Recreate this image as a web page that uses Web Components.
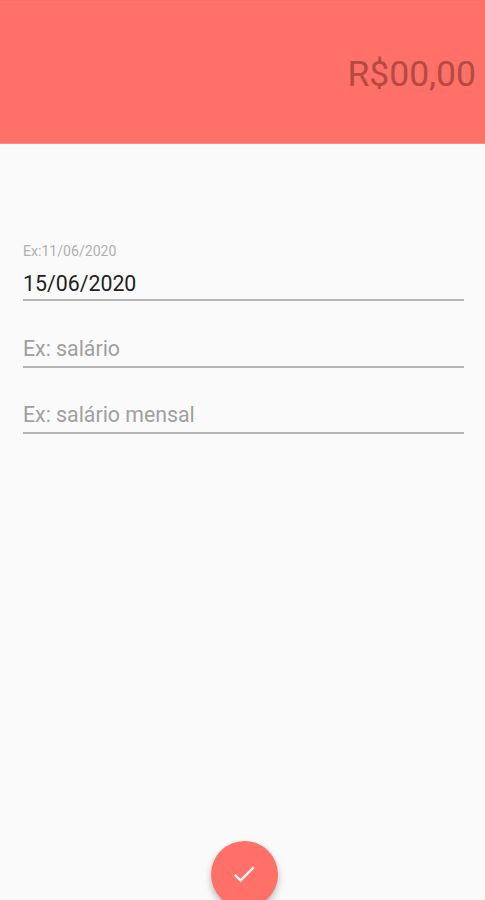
<!DOCTYPE html>
<html lang="pt-BR">
<head>
<meta charset="utf-8">
<title>Receita</title>
<style>
  body{ margin:0; font-family: Roboto, "Liberation Sans", sans-serif; }
</style>
</head>
<body>
<entry-screen>
  <amount-bar slot="top">R$00,00</amount-bar>
  <text-field label="Ex:11/06/2020" value="15/06/2020"></text-field>
  <text-field hint="Ex: salário"></text-field>
  <text-field hint="Ex: salário mensal"></text-field>
  <save-fab slot="action"></save-fab>
</entry-screen>

<script>
  const mount = (el, html) => {
    el.attachShadow({mode:'open'}).innerHTML = html;
  };

  class EntryScreen extends HTMLElement {
    constructor(){
      super();
      mount(this, `
        <style>
          :host{
            display:flex; flex-direction:column;
            height:900px;
            background:#fafafa;
            overflow:hidden;
          }
          .form{ flex:1; padding:91px 21px 0 23px }
          .action{ display:flex; justify-content:center; height:59px; padding-left:3px }
        </style>
        <slot name="top"></slot>
        <div class="form"><slot></slot></div>
        <div class="action"><slot name="action"></slot></div>
      `);
    }
  }

  class AmountBar extends HTMLElement {
    constructor(){
      super();
      mount(this, `
        <style>
          :host{
            display:flex; align-items:center; justify-content:flex-end;
            box-sizing:border-box;
            height:144px;
            padding:4px 9px 0 0;
            background:#ff7069;
            border-top:1px solid #f46f69;
            border-bottom:1px solid #fe8c86;
            color:#b24b43;
            font-size:35.5px;
          }
        </style>
        <slot></slot>
      `);
    }
  }

  class TextField extends HTMLElement {
    connectedCallback(){
      if(this.shadowRoot) return;
      const label = this.getAttribute('label');
      const value = this.getAttribute('value');
      const hint  = this.getAttribute('hint');
      mount(this, `
        <style>
          :host{
            display:flex; flex-direction:column; justify-content:flex-end;
            box-sizing:border-box;
            height:66.4px;
            border-bottom:2px solid #b5b5b5;
            padding-bottom:5px;
          }
          :host([value]){ padding-bottom:3px }
          .label{ font-size:14.1px; line-height:16px; color:#b0b0b0; margin-bottom:13px }
          .text{ font-size:21.3px; line-height:24px; color:#222 }
          .hint{ color:#a0a0a0 }
        </style>
        ${label ? `<div class="label">${label}</div>` : ''}
        <div class="text ${value ? '' : 'hint'}">${value || hint}</div>
      `);
    }
  }

  class SaveFab extends HTMLElement {
    constructor(){
      super();
      mount(this, `
        <style>
          :host{
            display:grid; place-items:center;
            width:67px; height:67px;
            border-radius:50%;
            background:#ff7069;
            box-shadow:0 4px 7px rgba(0,0,0,.26);
          }
          svg{ width:28px; height:28px; margin-bottom:1px }
        </style>
        <svg viewBox="0 0 24 24" fill="#fff5ef"><path d="M9 16.17 4.83 12l-1.42 1.41L9 19 21 7l-1.41-1.41z"/></svg>
      `);
    }
  }

  customElements.define('entry-screen', EntryScreen);
  customElements.define('amount-bar', AmountBar);
  customElements.define('text-field', TextField);
  customElements.define('save-fab', SaveFab);
</script>
</body>
</html>
